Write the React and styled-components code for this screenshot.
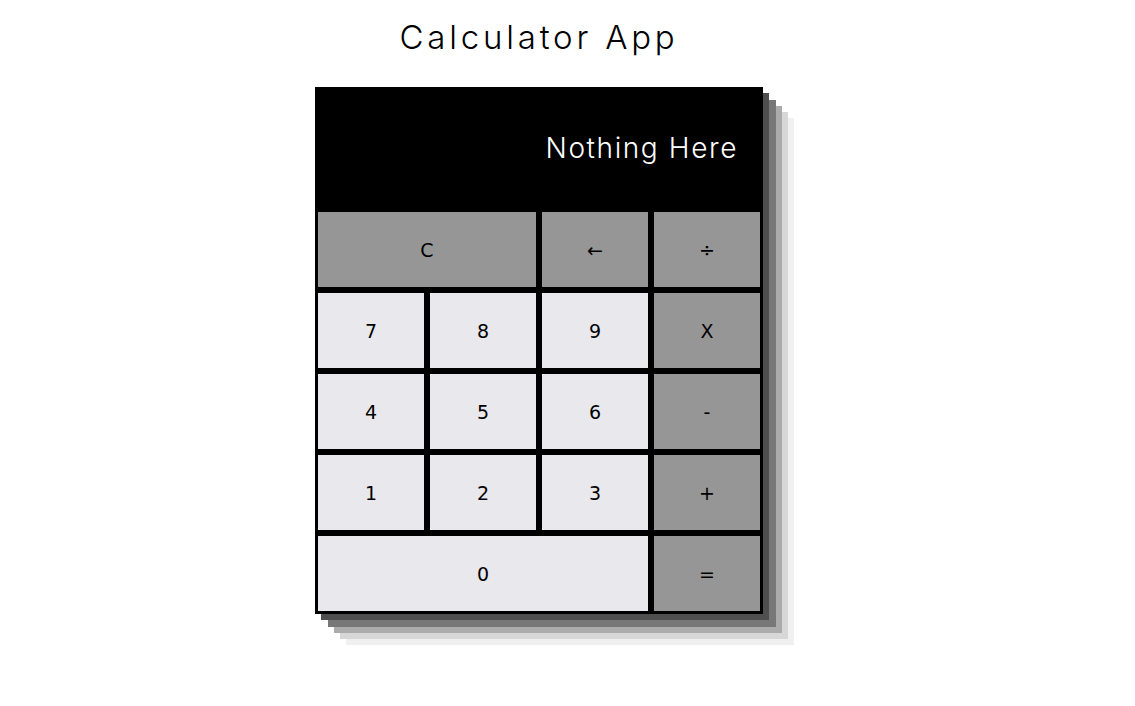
import React from 'react'
import styled, { createGlobalStyle } from 'styled-components';

const GlobalStyle = createGlobalStyle`
    body {
        margin: 0;
        background: #ffffff;
        font-family: "DejaVu Sans", sans-serif;
    }
`;

const Page = styled.div`
    width: 1078px;
    min-height: 706px;
    display: flex;
    flex-direction: column;
    align-items: center;
`;

const Title = styled.h1`
    margin: 0;
    padding-top: 17px;
    height: 87px;
    box-sizing: border-box;
    font-family: "Inter", "Noto Sans", sans-serif;
    font-weight: 300;
    font-size: 33px;
    line-height: 40px;
    letter-spacing: 3.8px;
    color: #000;
`;

const Calculator = styled.div`
    display: grid;
    grid-template-columns: repeat(4, 106px);
    grid-template-rows: 116px repeat(5, 75px);
    gap: 6px;
    padding: 3px;
    background: #000;
    box-shadow:
        6px 6px 0 #4f4f4f,
        13px 13px 0 #777777,
        19px 19px 0 #ababab,
        25px 25px 0 #d7d7d7,
        31px 31px 0 #f0f0f0;
`;

const Display = styled.div`
    grid-column: span 4;
    display: flex;
    align-items: center;
    justify-content: flex-end;
    padding-right: 22px;
    color: #fff;
    font-family: "Inter", "Noto Sans", sans-serif;
    font-weight: 300;
    font-size: 28px;
    letter-spacing: 1.6px;
`;

const Key = styled.button`
    grid-column: span ${p => p.$span || 1};
    border: none;
    margin: 0;
    padding: 0;
    background: ${p => p.$op ? '#969696' : '#e9e8ed'};
    color: #000;
    font-family: "DejaVu Sans", sans-serif;
    font-size: 19px;
    cursor: pointer;
`;

const keys = [
    { label: 'C', span: 2, op: true },
    { label: '←', op: true },
    { label: '÷', op: true },
    { label: '7' }, { label: '8' }, { label: '9' }, { label: 'X', op: true },
    { label: '4' }, { label: '5' }, { label: '6' }, { label: '-', op: true },
    { label: '1' }, { label: '2' }, { label: '3' }, { label: '+', op: true },
    { label: '0', span: 3 }, { label: '=', op: true },
];

const App = () => {
    return (
        <Page>
            <GlobalStyle />
            <Title>Calculator App</Title>
            <Calculator>
                <Display>Nothing Here</Display>
                {keys.map(k => (
                    <Key key={k.label} $span={k.span} $op={k.op}>{k.label}</Key>
                ))}
            </Calculator>
        </Page>
    )
}

export default App
